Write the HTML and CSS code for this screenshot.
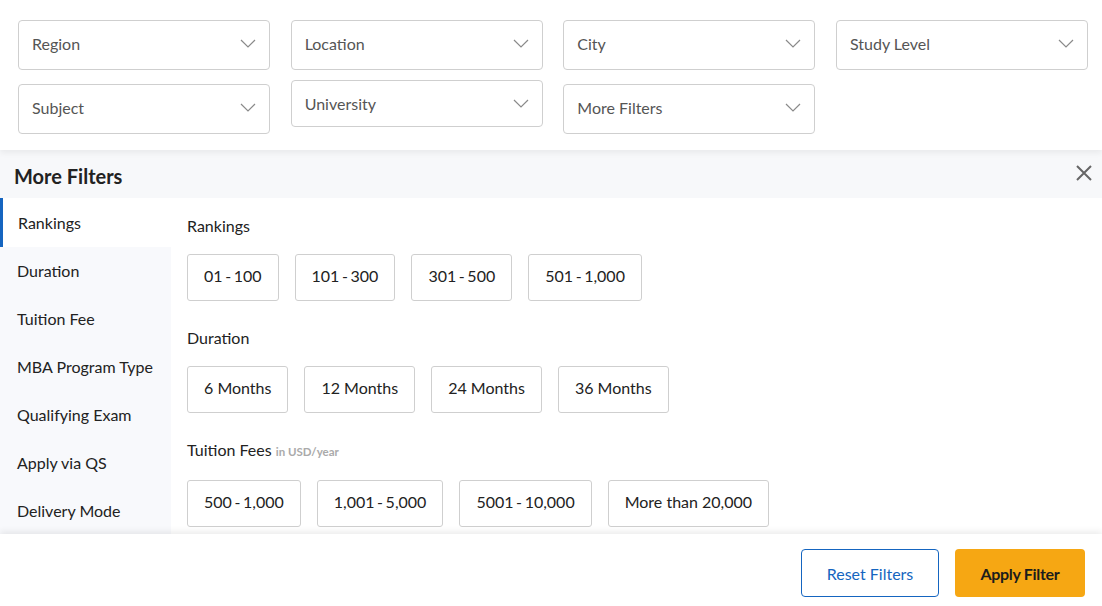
FILE: index.html
```html
<!DOCTYPE html>
<html>
<head>
<meta charset="utf-8">
<link rel="stylesheet" href="styles.css">
</head>
<body>
<div class="page">
  <section class="filters">
    <div class="dd"><span>Region</span><svg class="chev" viewBox="0 0 16 9"><polyline points="1,1 8,8 15,1"/></svg></div>
    <div class="dd"><span>Location</span><svg class="chev" viewBox="0 0 16 9"><polyline points="1,1 8,8 15,1"/></svg></div>
    <div class="dd"><span>City</span><svg class="chev" viewBox="0 0 16 9"><polyline points="1,1 8,8 15,1"/></svg></div>
    <div class="dd"><span>Study Level</span><svg class="chev" viewBox="0 0 16 9"><polyline points="1,1 8,8 15,1"/></svg></div>
    <div class="dd"><span>Subject</span><svg class="chev" viewBox="0 0 16 9"><polyline points="1,1 8,8 15,1"/></svg></div>
    <div class="dd dd-short"><span>University</span><svg class="chev" viewBox="0 0 16 9"><polyline points="1,1 8,8 15,1"/></svg></div>
    <div class="dd"><span>More Filters</span><svg class="chev" viewBox="0 0 16 9"><polyline points="1,1 8,8 15,1"/></svg></div>
  </section>

  <header class="mf-head">
    <h2>More Filters</h2>
    <svg class="close" viewBox="0 0 16 16"><path d="M1 1 L15 15 M15 1 L1 15"/></svg>
  </header>

  <div class="mf-body">
    <nav class="side">
      <div class="side-item active">Rankings</div>
      <div class="side-item">Duration</div>
      <div class="side-item">Tuition Fee</div>
      <div class="side-item">MBA Program Type</div>
      <div class="side-item">Qualifying Exam</div>
      <div class="side-item">Apply via QS</div>
      <div class="side-item">Delivery Mode</div>
    </nav>
    <div class="content">
      <div class="group">
        <div class="g-label">Rankings</div>
        <div class="chips">
          <div class="chip chip-range">01 - 100</div>
          <div class="chip chip-range">101 - 300</div>
          <div class="chip chip-range">301 - 500</div>
          <div class="chip chip-range">501 - 1,000</div>
        </div>
      </div>
      <div class="group">
        <div class="g-label">Duration</div>
        <div class="chips">
          <div class="chip">6 Months</div>
          <div class="chip">12 Months</div>
          <div class="chip">24 Months</div>
          <div class="chip">36 Months</div>
        </div>
      </div>
      <div class="group">
        <div class="g-label">Tuition Fees <small>in USD/year</small></div>
        <div class="chips">
          <div class="chip chip-range">500 - 1,000</div>
          <div class="chip chip-range">1,001 - 5,000</div>
          <div class="chip chip-range">5001 - 10,000</div>
          <div class="chip">More than 20,000</div>
        </div>
      </div>
    </div>
  </div>

  <footer class="foot">
    <button class="btn btn-reset">Reset Filters</button>
    <button class="btn btn-apply">Apply Filter</button>
  </footer>
</div>
</body>
</html>
```

FILE: styles.css
```css
* { box-sizing: border-box; }
html, body { margin: 0; padding: 0; }
body {
  font-family: Lato, "Open Sans", sans-serif;
  color: #222;
  background: #fff;
  width: 1102px;
  height: 606px;
  overflow: hidden;
}
.page {
  display: flex;
  flex-direction: column;
  height: 606px;
}
.filters {
  position: relative;
  z-index: 2;
  display: grid;
  grid-template-columns: repeat(4, 252px);
  grid-auto-rows: 50px;
  column-gap: 20.67px;
  row-gap: 14px;
  padding: 20px 14px 0 18px;
  height: 150px;
  background: #fff;
  box-shadow: 0 3px 6px rgba(0,0,0,0.06);
}
.dd {
  display: flex;
  align-items: center;
  justify-content: space-between;
  border: 1px solid #cfcfcf;
  border-radius: 4px;
  padding: 0 13px 3px 13px;
  font-size: 16px;
  color: #555;
  height: 50px;
}
.dd-short {
  height: 47px;
  margin-top: -4px;
  padding-bottom: 1px;
}
.chev {
  width: 16px;
  height: 9px;
  margin-left: auto;
  fill: none;
  stroke: #8a8a8a;
  stroke-width: 1.2;
}
.mf-head {
  display: flex;
  align-items: center;
  justify-content: space-between;
  height: 48px;
  padding: 3px 10px 0 14px;
  background: #f7f8fa;
}
.mf-head h2 {
  margin: 0;
  font-size: 20px;
  font-weight: 700;
  color: #222;
}
.close {
  width: 16px;
  height: 16px;
  margin-top: -6px;
  fill: none;
  stroke: #666;
  stroke-width: 2;
}
.mf-body {
  display: flex;
  flex: 1;
  overflow: hidden;
}
.side {
  width: 171px;
  flex: none;
  background: #f8f9fc;
}
.side-item {
  height: 48px;
  display: flex;
  align-items: center;
  padding: 0 0 1px 17px;
  font-size: 16px;
  color: #222;
}
.side-item.active {
  background: #fff;
  border-left: 3px solid #1565c0;
  padding-left: 15px;
  height: 49px;
}
.content {
  flex: 1;
  padding: 18px 0 0 16px;
}
.group {
  margin-bottom: 27px;
}
.g-label {
  font-size: 16px;
  line-height: 20px;
  color: #222;
  margin-bottom: 18px;
}
.g-label small {
  font-size: 11.5px;
  font-weight: 700;
  color: #aaa;
}
.chips {
  display: flex;
  gap: 16px;
}
.chip {
  height: 47px;
  display: flex;
  align-items: center;
  padding: 0 16px 5px;
  border: 1px solid #cfcfcf;
  border-radius: 3px;
  font-size: 16px;
  color: #222;
}
.chip-range {
  word-spacing: -1.5px;
}
.foot {
  position: relative;
  z-index: 2;
  height: 72px;
  flex: none;
  display: flex;
  justify-content: flex-end;
  align-items: flex-start;
  gap: 16px;
  padding: 15px 17px 0 0;
  background: #fff;
  box-shadow: 0 -3px 6px rgba(0,0,0,0.07);
}
.btn {
  height: 48px;
  border-radius: 4px;
  font-family: Lato, "Open Sans", sans-serif;
  font-size: 16px;
  cursor: pointer;
}
.btn-reset {
  width: 138px;
  background: #fff;
  border: 1px solid #1565c0;
  color: #1565c0;
}
.btn-apply {
  width: 130px;
  background: #f6a713;
  border: none;
  color: #1c1c1c;
  font-weight: 700;
  font-size: 16px;
  letter-spacing: -0.3px;
}
```
